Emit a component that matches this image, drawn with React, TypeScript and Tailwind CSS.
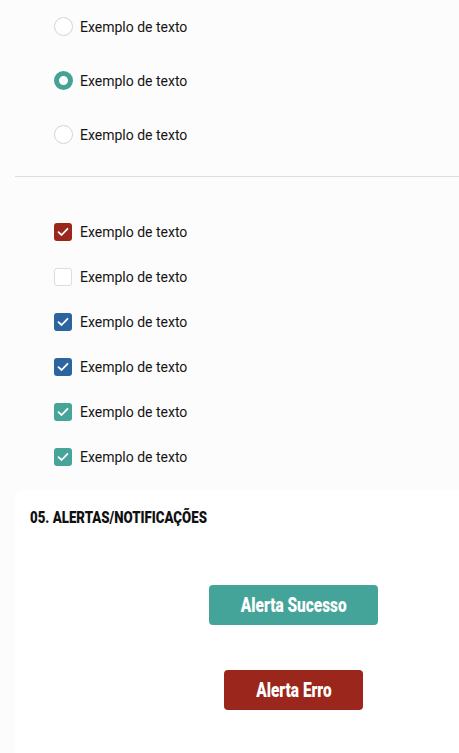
import React from "react";

const labelCls = "text-[14px] leading-[18px] text-[#141414]";
const font = { fontFamily: "Roboto, 'Liberation Sans', sans-serif" };

function Radio({ checked }: { checked?: boolean }) {
  return (
    <div className="flex items-center gap-[7px] h-[19px]">
      {checked ? (
        <span className="w-[19px] h-[19px] rounded-full border-[5px] border-[#45a297] bg-white box-border" />
      ) : (
        <span className="w-[19px] h-[19px] rounded-full border border-[#d4d4d4] bg-white box-border" />
      )}
      <span className={labelCls}>Exemplo de texto</span>
    </div>
  );
}

function Check({ color }: { color?: string }) {
  return (
    <div className="flex items-center gap-[8px] h-[18px]">
      {color ? (
        <span className={`w-[18px] h-[18px] rounded-[3px] flex items-center justify-center ${color}`}>
          <svg width="12" height="10" viewBox="0 0 12 10" fill="none">
            <polyline points="1.5,5.2 4.6,8 10.5,1.8" stroke="white" strokeWidth="1.8" strokeLinecap="round" strokeLinejoin="round" />
          </svg>
        </span>
      ) : (
        <span className="w-[18px] h-[18px] rounded-[3px] border border-[#dcdcdc] bg-white box-border" />
      )}
      <span className={labelCls}>Exemplo de texto</span>
    </div>
  );
}

export default function App() {
  return (
    <div className="min-h-[753px] w-full bg-[#fcfcfc] overflow-hidden" style={font}>
      <div className="flex flex-col gap-[35px] pt-[17px] pl-[54px]">
        <Radio />
        <Radio checked />
        <Radio />
      </div>
      <div className="ml-[15px] mt-[32px] h-px bg-[#dcdce3]" />
      <div className="flex flex-col gap-[27px] pt-[46px] pl-[54px]">
        <Check color="bg-[#9a261c]" />
        <Check />
        <Check color="bg-[#2c64a0]" />
        <Check color="bg-[#2c64a0]" />
        <Check color="bg-[#46a499]" />
        <Check color="bg-[#46a499]" />
      </div>
      <div className="ml-[15px] mt-[24px] bg-white rounded-tl-[8px] min-h-[263px] pt-[17px]">
        <h2 className="pl-[15px] text-[17px] leading-[20px] font-black text-[#111]">
          <span className="inline-block origin-left scale-x-[0.78] whitespace-nowrap">05. ALERTAS/NOTIFICAÇÕES</span>
        </h2>
        <div className="flex flex-col items-center gap-[45px] pl-[113px] mt-[58px]">
          <button className="w-[169px] h-[40px] rounded-[4px] bg-[#45a499] text-white text-[20px] font-black">
            <span className="inline-block scale-x-[0.77] whitespace-nowrap">Alerta Sucesso</span>
          </button>
          <button className="w-[139px] h-[40px] rounded-[4px] bg-[#9a261c] text-white text-[20px] font-black">
            <span className="inline-block scale-x-[0.77] whitespace-nowrap">Alerta Erro</span>
          </button>
        </div>
      </div>
    </div>
  );
}
